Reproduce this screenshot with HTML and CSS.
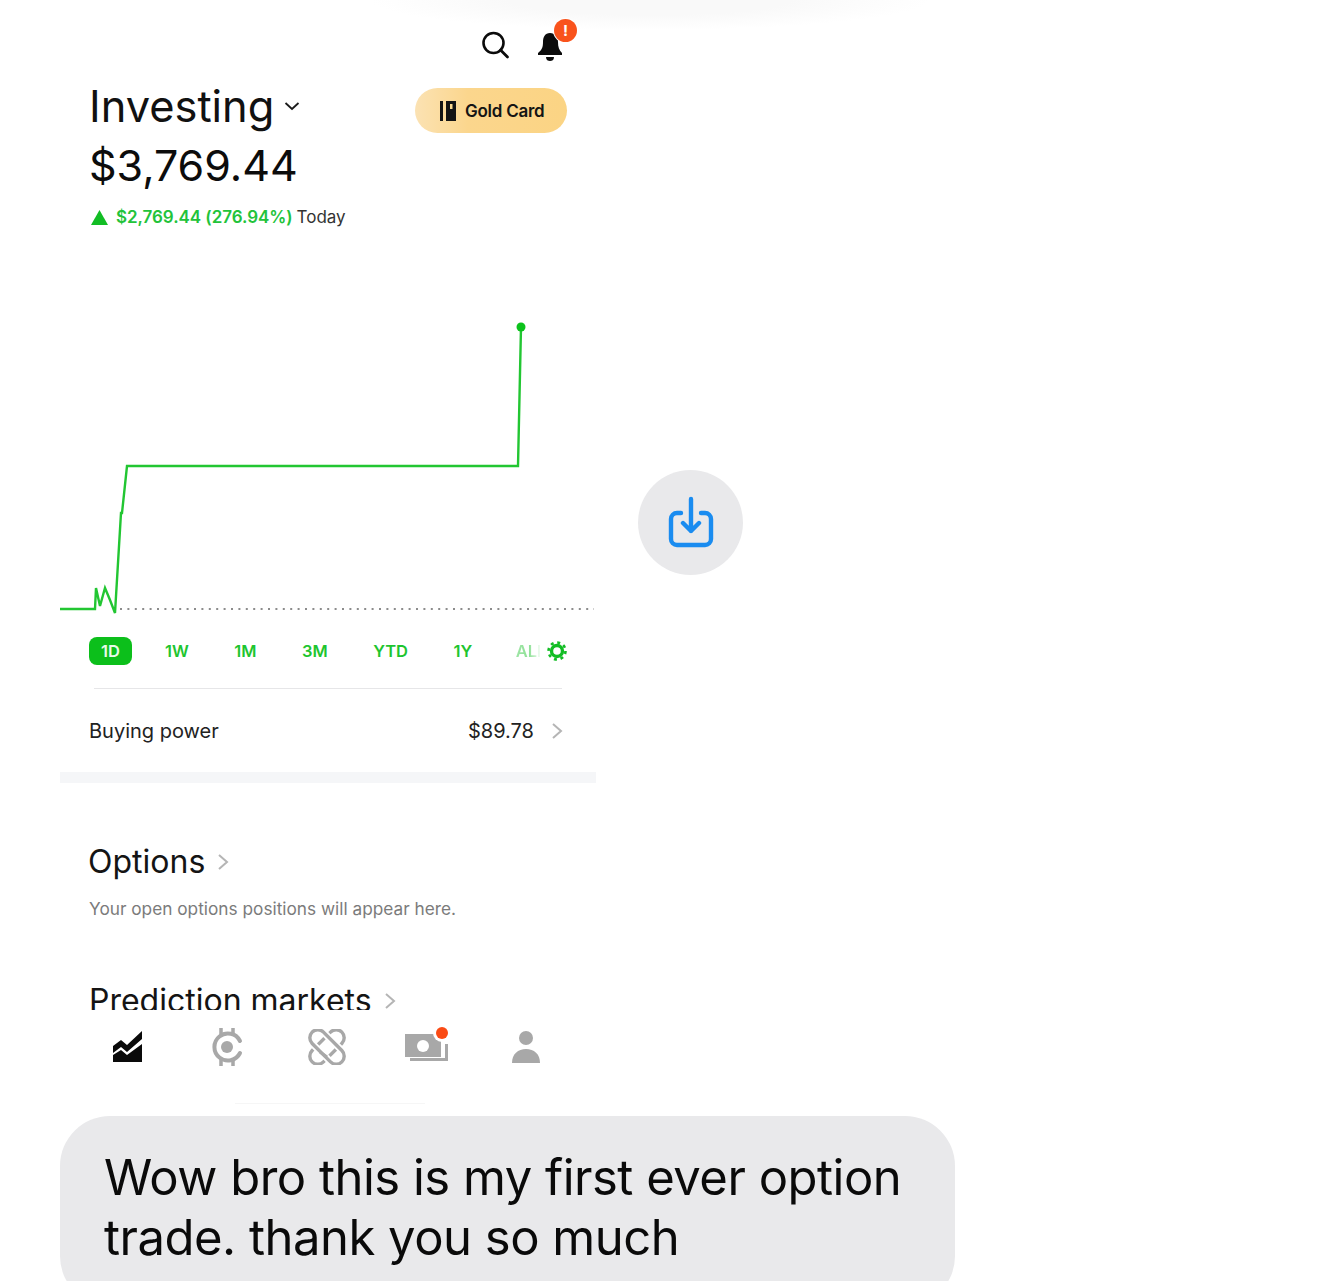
FILE: index.html
```html
<!DOCTYPE html>
<html lang="en">
<head>
<meta charset="utf-8">
<title>Investing</title>
<link rel="stylesheet" href="styles.css">
</head>
<body>
<div class="page">
  <div class="top">
    <main class="shot">
      <div class="toolbar">
        <svg class="search" width="30" height="30" viewBox="0 0 30 30"><circle cx="13.500" cy="13" r="10" fill="none" stroke="#0b0b0b" stroke-width="2.600"/><path d="M20.500 20l7 7" stroke="#0b0b0b" stroke-width="2.800" stroke-linecap="round"/></svg>
        <span class="bell">
          <svg width="28" height="32" viewBox="0 0 28 32"><path d="M14 3c-5 0-7 4-7 9 0 5-1 8-5 11v2h24v-2c-3-3-4-6-4-11 0-5-3-9-8-9z" fill="#0b0b0b"/><path d="M10 27h8c0 3-2 4-4 4s-4-1-4-4z" fill="#0b0b0b"/></svg>
          <span class="badge">!</span>
        </span>
      </div>
      <div class="summary">
        <div class="summary-text">
          <h1 class="title">Investing<svg class="caret" width="16" height="10" viewBox="0 0 16 10"><path d="M1.500 2l6.500 6 6.500-6" fill="none" stroke="#1a1a1a" stroke-width="1.800"/></svg></h1>
          <div class="value">$3,769.44</div>
          <div class="change">
            <svg width="17" height="15" viewBox="0 0 17 15"><path d="M8.500 0L17 15H0z" fill="#12bd24"/></svg>
            <span class="gain">$2,769.44 (276.94%)</span>
            <span class="today">Today</span>
          </div>
        </div>
        <div class="gold">
          <svg width="17" height="20" viewBox="0 0 17 20"><path d="M0 0h3v20H0z" fill="#141414"/><path d="M6 0h10v20H6z" fill="#141414"/><path d="M10 3h2.500v5H10z" fill="#fbd98f"/></svg>
          <span>Gold Card</span>
        </div>
      </div>
      <svg class="chart" width="536" height="325" viewBox="0 0 536 325">
        <path d="M60 314H534" fill="none" stroke="#8c8c8c" stroke-width="2" stroke-dasharray="2 5.400"/>
        <path d="M0 314H35L36 293 40 311 45 293 50 305 55 318 61 218 62 218 67 171H457L458 171 461 32" fill="none" stroke="#22c632" stroke-width="2.400"/>
        <circle cx="461" cy="32" r="4.500" fill="#0cc21c"/>
      </svg>
      <div class="ranges">
        <span class="range active">1D</span>
        <span class="range">1W</span>
        <span class="range">1M</span>
        <span class="range">3M</span>
        <span class="range">YTD</span>
        <span class="range">1Y</span>
        <span class="range faded">ALL</span>
        <svg class="gear" width="22" height="22" viewBox="0 0 22 22"><circle cx="11" cy="11" r="5.500" fill="none" stroke="#12bd24" stroke-width="3.400"/><circle cx="11" cy="11" r="8.500" fill="none" stroke="#12bd24" stroke-width="2.600" stroke-dasharray="3 3.670"/></svg>
      </div>
      <div class="rule"></div>
      <div class="power">
        <span>Buying power</span>
        <span class="power-value">$89.78<svg width="13" height="18" viewBox="0 0 13 18"><path d="M2 2l8 7-8 7" fill="none" stroke="#b5b5b5" stroke-width="2"/></svg></span>
      </div>
      <div class="band"></div>
      <section class="options">
        <h2 class="section-title">Options<svg width="13" height="18" viewBox="0 0 13 18"><path d="M2 2l8 7-8 7" fill="none" stroke="#b5b5b5" stroke-width="2"/></svg></h2>
        <p class="hint">Your open options positions will appear here.</p>
      </section>
      <section class="prediction">
        <h2 class="section-title">Prediction markets<svg width="13" height="18" viewBox="0 0 13 18"><path d="M2 2l8 7-8 7" fill="none" stroke="#b5b5b5" stroke-width="2"/></svg></h2>
      </section>
      <nav class="tabs">
        <svg width="34" height="34" viewBox="0 0 34 34"><path d="M2 16l8-6 6 5 15-14v8L16 22l-6-5-8 6z" fill="#0a0a0a"/><path d="M2 25l8-5 6 5 15-11v18H2z" fill="#0a0a0a"/></svg>
        <svg width="34" height="40" viewBox="0 0 34 40"><path d="M11 1v7M23 1v7M11 32v7M23 32v7" stroke="#a8a8a8" stroke-width="3.500"/><path d="M30 14A13.500 13.500 0 1 0 30 26" fill="none" stroke="#a8a8a8" stroke-width="4" stroke-linecap="round"/><circle cx="17" cy="20" r="6" fill="#a8a8a8"/></svg>
        <svg width="38" height="36" viewBox="0 0 38 36"><rect x="-2" y="10" width="42" height="16" rx="8" fill="none" stroke="#a8a8a8" stroke-width="3.400" transform="rotate(-45 19 18)"/><rect x="-2" y="10" width="42" height="16" rx="8" fill="none" stroke="#fff" stroke-width="7" transform="rotate(45 19 18)"/><rect x="-2" y="10" width="42" height="16" rx="8" fill="none" stroke="#a8a8a8" stroke-width="3.400" transform="rotate(45 19 18)"/><path d="M12 23l7 5" stroke="#a8a8a8" stroke-width="3"/></svg>
        <span class="cash">
          <svg width="46" height="36" viewBox="0 0 46 36"><path d="M2 5h36v23H2z" fill="#a8a8a8"/><circle cx="20" cy="17" r="6" fill="#fff"/><path d="M7 32h38V15h-3v14H7z" fill="#a8a8a8"/><circle cx="39" cy="4" r="9" fill="#fff"/></svg>
          <span class="dot"></span>
        </span>
        <svg width="30" height="34" viewBox="0 0 30 34"><circle cx="15" cy="8" r="7" fill="#a8a8a8"/><path d="M1 33c0-9 6-14 14-14s14 5 14 14z" fill="#a8a8a8"/></svg>
      </nav>
      <div class="home-line"></div>
    </main>
    <button class="save" aria-label="Save">
      <svg width="46" height="54" viewBox="0 0 46 54"><path d="M13 17H9a6 6 0 0 0-6 6v20a6 6 0 0 0 6 6h28a6 6 0 0 0 6-6V23a6 6 0 0 0-6-6h-4" fill="none" stroke="#1a8cf0" stroke-width="4.400" stroke-linecap="round"/><path d="M23 3v32M15 27l8 8 8-8" fill="none" stroke="#1a8cf0" stroke-width="4.400" stroke-linecap="round" stroke-linejoin="round"/></svg>
    </button>
  </div>
  <div class="bubble">Wow bro this is my first ever option trade. thank you so much</div>
</div>
</body>
</html>
```
FILE: styles.css
```css
* { box-sizing: border-box; }
html, body { margin: 0; background: #fff; }
body { height: 1281px; overflow: hidden; font-family: Inter, "Liberation Sans", sans-serif; color: #111; }
.page { padding-left: 60px; position: relative; }
.page::before { content: ""; position: absolute; left: 370px; top: -30px; width: 560px; height: 60px; border-radius: 50%; background: radial-gradient(closest-side, #f9f9f9 50%, #fff 100%); }
.top { display: flex; height: 1116px; position: relative; }
.shot { width: 536px; flex: none; }
.toolbar { height: 80px; padding: 30px 0 0 420px; display: flex; align-items: flex-start; gap: 26px; }
.bell { position: relative; width: 28px; height: 32px; }
.badge { position: absolute; left: 18px; top: -11px; width: 23px; height: 23px; border-radius: 50%; background: #f9531c; color: #fff; font-size: 15px; font-weight: 700; line-height: 23px; text-align: center; box-shadow: 0 0 0 1px #fff; }
.summary { display: flex; justify-content: space-between; height: 150px; padding-left: 29px; padding-right: 29px; }
.summary-text { display: flex; flex-direction: column; }
.title { margin: 0 0 2px; font-size: 43.4px; font-weight: 400; line-height: 52px; color: #111; display: flex; align-items: center; gap: 10px; }
.value { font-size: 43px; line-height: 62px; font-weight: 400; color: #0c0c0c; }
.change { display: flex; align-items: center; gap: 8px; font-size: 17px; line-height: 24px; margin-top: 9px; padding-left: 2px; }
.gain { color: #22c33a; font-weight: 600; letter-spacing: -0.05px; margin-right: -4px; }
.today { color: #333; }
.gold { margin-top: 8px; width: 152px; height: 45px; border-radius: 23px; background: linear-gradient(90deg, #fbe2b3 0%, #fbd68d 35%, #fbd484 100%); display: flex; align-items: center; gap: 8px; padding-left: 25px; font-size: 17px; font-weight: 600; color: #141414; letter-spacing: -0.25px; }
.chart { display: block; margin-top: 65px; }
.ranges { height: 28px; margin: 17px 0 0 29px; display: flex; align-items: center; gap: 45.5px; font-size: 16.5px; font-weight: 600; color: #1ec52f; width: 490px; position: relative; }
.range.active { width: 43px; height: 28px; line-height: 28px; text-align: center; background: #0cbf1b; color: #e8fbe9; border-radius: 8px; margin-right: -12.5px; }
.range.faded { width: 24px; margin-left: -2px; overflow: hidden; white-space: nowrap; background: linear-gradient(90deg, #9fe5a6 0%, #8fe197 55%, #f0fbf1 100%); -webkit-background-clip: text; background-clip: text; color: transparent; }
.gear { position: absolute; left: 457px; top: 3px; }
.rule { height: 1px; margin: 23px 34px 0 34px; background: #e6e6e8; }
.power { height: 83px; margin-left: 29px; margin-right: 32px; display: flex; justify-content: space-between; align-items: center; font-size: 20px; color: #222; }
.power-value { display: flex; align-items: center; gap: 17px; }
.band { height: 11px; background: #f5f6f8; }
.options { padding: 60px 0 0 28px; height: 187px; }
.section-title { margin: 0; font-size: 32px; font-weight: 400; line-height: 38px; display: flex; align-items: center; gap: 12px; color: #141414; }
.hint { margin: 16px 0 0 1px; font-size: 17.25px; line-height: 24px; color: #7b7b7b; }
.prediction { padding-left: 29px; height: 40px; overflow: hidden; }
.prediction .section-title { margin-top: 12px; }
.tabs { height: 60px; margin: 7px 0 0 18px; display: grid; grid-template-columns: repeat(5, 99.5px); justify-items: center; align-items: center; }
.cash { position: relative; width: 46px; height: 36px; }
.cash svg { display: block; }
.dot { position: absolute; left: 33px; top: -2px; width: 12px; height: 12px; border-radius: 50%; background: #fa4a14; }
.home-line { width: 190px; height: 1px; margin: 26px 0 0 175px; background: #f6f6f6; }
.save { flex: none; width: 105px; height: 105px; margin: 470px 0 0 42px; padding: 0; border: 0; border-radius: 50%; background: #e9e9eb; display: flex; align-items: center; justify-content: center; }
.bubble { width: 895px; height: 190px; padding: 32px 44px 0; border-radius: 50px; background: #e9e9eb; font-size: 49px; line-height: 60px; letter-spacing: -0.5px; color: #0a0a0a; }
```
